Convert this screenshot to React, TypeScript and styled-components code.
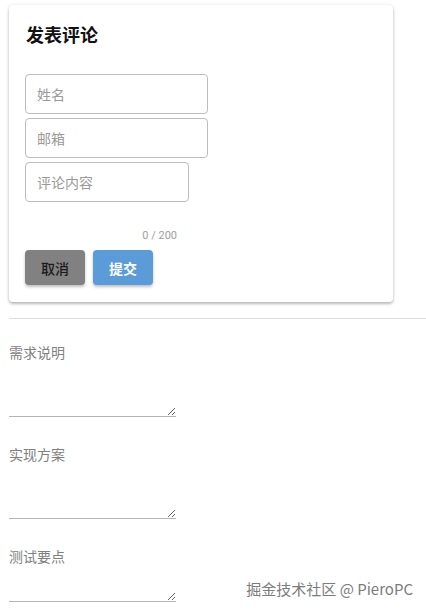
import React from "react";
import styled, { createGlobalStyle } from "styled-components";

const Global = createGlobalStyle`
  html, body { margin: 0; padding: 0; background: #fff; }
  body { font-family: Roboto, "Noto Sans CJK SC", sans-serif; overflow: hidden; }
  * { box-sizing: border-box; }
`;

const Page = styled.div`
  position: relative;
  width: 426px;
  height: 613px;
  padding: 5px 0 0 9px;
`;

const Card = styled.div`
  width: 384px;
  background: #fff;
  border-radius: 4px;
  box-shadow: 0 2px 3px rgba(0,0,0,0.25), 0 0 4px rgba(0,0,0,0.08);
  padding: 17px 16px 17px 16px;
  display: flex;
  flex-direction: column;
`;

const Title = styled.h2`
  margin: 0 0 28px 1px;
  font-family: "Noto Sans CJK SC", sans-serif;
  font-size: 18px;
  font-weight: 700;
  line-height: 24px;
  color: #111;
`;

const Field = styled.input<{ $w: number }>`
  width: ${(p) => p.$w}px;
  height: 40px;
  border: 1px solid #bdbdbd;
  border-radius: 4px;
  padding: 0 11px;
  font-family: "Noto Sans CJK SC", sans-serif;
  font-size: 14px;
  margin-bottom: 4px;
  outline: none;
  &::placeholder { color: #9a9a9a; }
`;

const Area = styled.textarea`
  width: 164px;
  height: 40px;
  border: 1px solid #bdbdbd;
  border-radius: 4px;
  padding: 9px 11px;
  font-family: "Noto Sans CJK SC", sans-serif;
  font-size: 14px;
  line-height: 20px;
  resize: none;
  outline: none;
  &::placeholder { color: #9a9a9a; }
`;

const Counter = styled.div`
  width: 152px;
  text-align: right;
  margin-top: 27px;
  font-family: Roboto, sans-serif;
  font-size: 11px;
  color: #9e9e9e;
  line-height: 14px;
`;

const Buttons = styled.div`
  display: flex;
  gap: 8px;
  margin-top: 7px;
`;

const Btn = styled.button<{ $primary?: boolean }>`
  width: 60px;
  height: 35px;
  border: none;
  border-radius: 4px;
  background: ${(p) => (p.$primary ? "#5a9bd8" : "#818181")};
  color: ${(p) => (p.$primary ? "#fff" : "#1a1a1a")};
  font-family: "Noto Sans CJK SC", sans-serif;
  font-size: 14px;
  font-weight: ${(p) => (p.$primary ? 700 : 500)};
  box-shadow: 0 2px 3px rgba(0,0,0,0.25);
`;

const Rule = styled.hr`
  margin: 16px 0 0 0;
  border: none;
  border-top: 1px solid #dedede;
  width: 417px;
`;

const Section = styled.div<{ $first?: boolean }>`
  display: flex;
  flex-direction: column;
  margin-top: ${(p) => (p.$first ? 23 : 27)}px;
`;

const Label = styled.div`
  font-family: "Noto Sans CJK SC", sans-serif;
  font-size: 14px;
  line-height: 20px;
  color: #808080;
`;

const Plain = styled.textarea<{ $h: number }>`
  width: 167px;
  height: ${(p) => p.$h}px;
  margin-top: 15px;
  border: none;
  border-bottom: 1px solid #b5b5b5;
  background: transparent;
  outline: none;
  padding: 0;
`;

const Watermark = styled.div`
  position: absolute;
  right: 13px;
  bottom: 14px;
  font-family: "Noto Sans CJK SC", sans-serif;
  font-size: 15px;
  color: #7c7c7c;
  text-shadow: 0 0 2px #fff;
`;

export default function App() {
  return (
    <>
      <Global />
      <Page>
        <Card>
          <Title>发表评论</Title>
          <Field $w={183} placeholder="姓名" />
          <Field $w={183} placeholder="邮箱" />
          <Area placeholder="评论内容" />
          <Counter>0 / 200</Counter>
          <Buttons>
            <Btn>取消</Btn>
            <Btn $primary>提交</Btn>
          </Buttons>
        </Card>
        <Rule />
        <Section $first>
          <Label>需求说明</Label>
          <Plain $h={40} />
        </Section>
        <Section>
          <Label>实现方案</Label>
          <Plain $h={40} />
        </Section>
        <Section>
          <Label>测试要点</Label>
          <Plain $h={21} />
        </Section>
        <Watermark>掘金技术社区 @ PieroPC</Watermark>
      </Page>
    </>
  );
}
